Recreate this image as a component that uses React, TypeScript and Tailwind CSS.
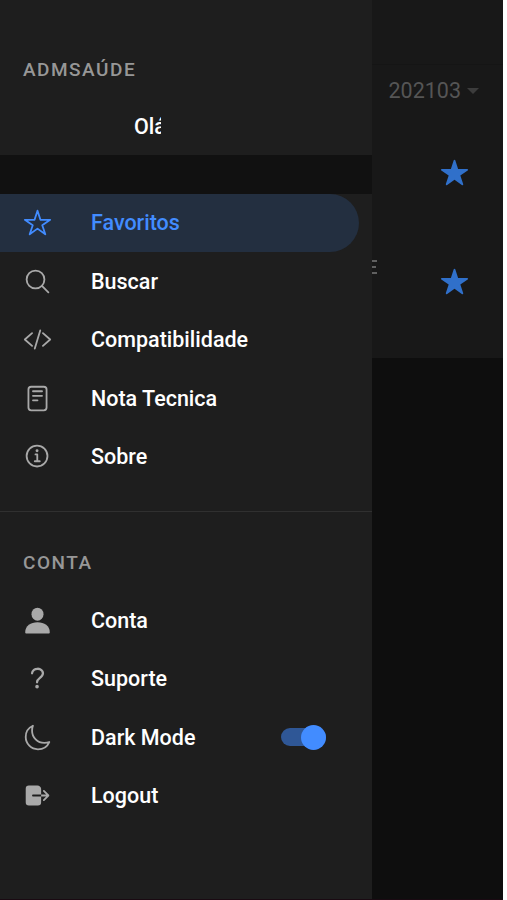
import clsx from "clsx";
import type { ComponentType } from "react";
import {
  IoCodeSlashOutline,
  IoHelpOutline,
  IoInformationCircleOutline,
  IoLogOut,
  IoMoonOutline,
  IoReaderOutline,
  IoSearchOutline,
  IoStar,
  IoStarOutline,
} from "react-icons/io5";

interface MenuItem {
  label: string;
  icon: ComponentType<{ className?: string }>;
  active?: boolean;
  toggle?: boolean;
}

const PersonIcon = ({ className }: { className?: string }) => (
  <svg viewBox="0 0 29 29" fill="currentColor" className={className}>
    <ellipse cx="14.5" cy="8.2" rx="6" ry="6.5" />
    <path d="M2.2 26.3c0-6.4 5.5-10 12.3-10s12.3 3.6 12.3 10c0 .8-.5 1.2-1.2 1.2H3.4c-.7 0-1.2-.4-1.2-1.2z" />
  </svg>
);

const mainItems: MenuItem[] = [
  { label: "Favoritos", icon: IoStarOutline, active: true },
  { label: "Buscar", icon: IoSearchOutline },
  { label: "Compatibilidade", icon: IoCodeSlashOutline },
  { label: "Nota Tecnica", icon: IoReaderOutline },
  { label: "Sobre", icon: IoInformationCircleOutline },
];

const accountItems: MenuItem[] = [
  { label: "Conta", icon: PersonIcon },
  { label: "Suporte", icon: IoHelpOutline },
  { label: "Dark Mode", icon: IoMoonOutline, toggle: true },
  { label: "Logout", icon: IoLogOut },
];

const Toggle = () => (
  <span className="mr-[33.5px] flex h-[18px] w-[45px] items-center justify-end rounded-full bg-[#2f5796]">
    <span className="size-[25px] shrink-0 rounded-full bg-[#428cff]" />
  </span>
);

const MenuRow = ({ item }: { item: MenuItem }) => {
  const Icon = item.icon;

  return (
    <li
      className={clsx(
        "mr-[12.5px] flex h-[58.5px] items-center rounded-r-full pl-[23px]",
        item.active ? "bg-[#232f40] text-[#428cff]" : "text-white"
      )}
    >
      <Icon
        className={clsx("size-[29px] shrink-0", !item.active && "text-[#a9a9a9]")}
      />
      <span className="ml-[39px] flex-1 pt-px text-[21.5px] leading-6 font-medium">
        {item.label}
      </span>
      {item.toggle && <Toggle />}
    </li>
  );
};

const SectionTitle = ({ children }: { children: string }) => (
  <h2 className="pl-[23px] text-[19px] leading-6 font-medium tracking-[1.5px] text-[#979797] uppercase">
    {children}
  </h2>
);

const SideMenu = () => (
  <nav className="flex w-[371.5px] shrink-0 flex-col bg-[#1e1e1e]">
    <div className="h-[155px] pt-[58px]">
      <SectionTitle>Admsaúde</SectionTitle>
      {/* The user name is cut off after the greeting */}
      <p className="mt-[33px] ml-[134px] w-[27px] overflow-hidden text-[21.5px] leading-6 font-medium whitespace-nowrap text-white">
        Olá
      </p>
    </div>
    <div className="h-[38.5px] bg-[#111111]" />
    <ul>
      {mainItems.map((item) => (
        <MenuRow key={item.label} item={item} />
      ))}
    </ul>
    <div className="mt-[25px] border-t border-[#303030] pt-[39px]">
      <SectionTitle>Conta</SectionTitle>
      <ul className="mt-4">
        {accountItems.map((item) => (
          <MenuRow key={item.label} item={item} />
        ))}
      </ul>
    </div>
  </nav>
);

// The page behind the open menu, dimmed by the backdrop
const Backdrop = () => (
  <main className="flex-1 bg-[#0e0e0e]">
    <div className="relative h-[358px] bg-[#181818]">
      <div className="h-[65px] border-b border-[#151515]" />
      <div className="flex items-center pt-3.5 pl-[17px] text-[21.5px] leading-6 text-[#555555]">
        202103
        <span className="ml-1.5 border-x-[6px] border-t-[6px] border-x-transparent border-t-[#3c3c3c]" />
      </div>
      <IoStar className="mt-[54.5px] ml-[68.5px] size-[29px] text-[#3070ca]" />
      <IoStar className="mt-20 ml-[68.5px] size-[29px] text-[#3070ca]" />
      <div className="absolute top-[260px] left-0 flex w-[5px] flex-col gap-1">
        <span className="h-[2px] bg-[#606060]" />
        <span className="h-[2px] w-1 bg-[#606060]" />
        <span className="h-[2px] bg-[#606060]" />
      </div>
    </div>
  </main>
);

const App = () => (
  <div className="h-[900px] w-[507px] bg-white font-['Roboto',sans-serif]">
    <div className="flex h-full w-[502.5px] border-b border-[#1a0a12]">
      <SideMenu />
      <Backdrop />
    </div>
  </div>
);

export default App;
